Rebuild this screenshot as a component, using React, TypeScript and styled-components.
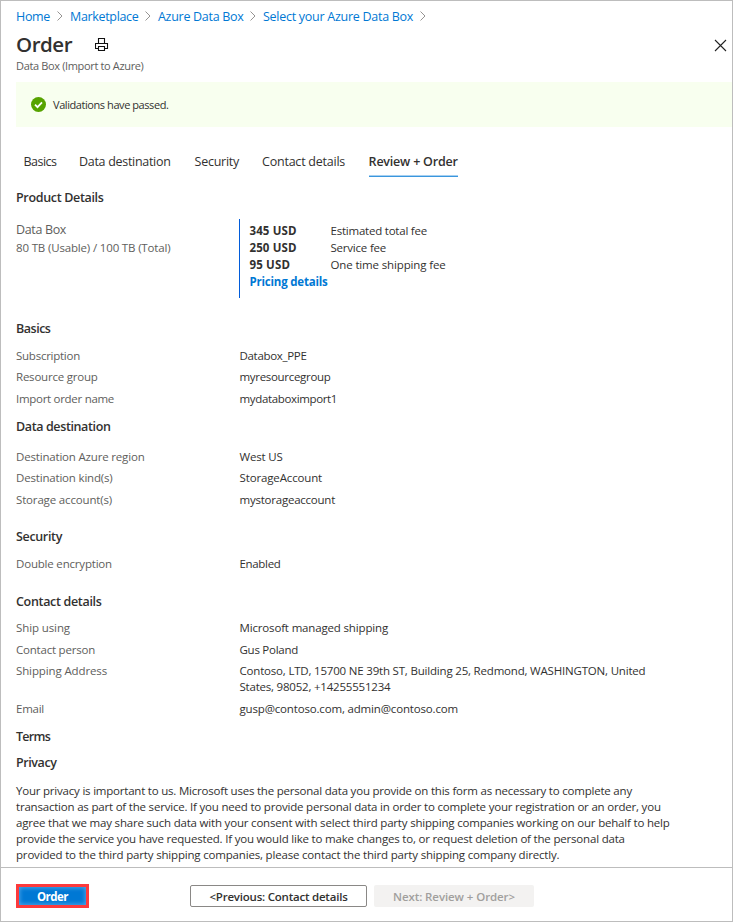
import React from "react";
import styled, { createGlobalStyle } from "styled-components";

const GlobalStyle = createGlobalStyle`
  *, *::before, *::after { box-sizing: border-box; }
  body { margin: 0; background: #fff; }
`;

const Page = styled.div`
  display: flex;
  flex-direction: column;
  width: 733px;
  height: 922px;
  border: 1px solid #bdbdbd;
  background: #fff;
  color: #323130;
  font-family: "Open Sans", "Noto Sans", sans-serif;
  font-size: 11.5px;
  line-height: 16px;
  overflow: hidden;
  white-space: nowrap;
`;

/* Letter spacing of one run of text, in px. */
const T = styled.span<{ $ls?: number }>`
  letter-spacing: ${(p) => p.$ls ?? -0.2}px;
`;

const Breadcrumbs = styled.nav`
  display: flex;
  height: 29px;
  padding: 7px 0 0 15px;
`;

const Crumb = styled.a<{ $w: number; $ls: number }>`
  display: flex;
  width: ${(p) => p.$w}px;
  justify-content: space-between;
  margin-right: 7px;
  font-size: 12.5px;
  line-height: 18px;
  color: #0078d4;
  letter-spacing: ${(p) => p.$ls}px;
`;

const ChevronIcon = styled.svg`
  width: 6px;
  height: 10px;
  margin-top: 3px;
  fill: none;
  stroke: #8a8886;
  stroke-width: 0.9;
`;

const TitleBar = styled.header`
  display: flex;
  align-items: center;
  height: 29px;
  padding: 0 5px 0 15px;
`;

const Title = styled.h1`
  margin: -2px 0 0;
  width: 79px;
  font-size: 20.5px;
  line-height: 28px;
  font-weight: 600;
  letter-spacing: -0.48px;
`;

const CloseIcon = styled.svg`
  width: 13px;
  height: 13px;
  margin-left: auto;
  margin-top: 1px;
`;

const Subtitle = styled.div`
  height: 23px;
  padding-left: 15px;
  font-size: 11px;
  line-height: 14px;
  color: #605e5c;
  letter-spacing: -0.35px;
`;

const Banner = styled.div`
  display: flex;
  align-items: center;
  gap: 7px;
  height: 45px;
  margin-left: 15px;
  padding-left: 15px;
  background: #f8ffef;
  font-size: 11px;
  letter-spacing: -0.43px;
`;

const Tabs = styled.div`
  display: flex;
  height: 51px;
  padding: 25px 0 0 22.5px;
`;

const Tab = styled.div<{ $gap: number; $ls: number; $active?: boolean }>`
  height: 25px;
  margin-right: ${(p) => p.$gap}px;
  font-size: 12.5px;
  line-height: 20px;
  letter-spacing: ${(p) => p.$ls}px;
  font-weight: ${(p) => (p.$active ? 600 : 400)};
  box-shadow: ${(p) => (p.$active ? "inset 0 -1px #3a96dd, inset 0 -2px #a6d0f1" : "none")};
`;

const Section = styled.section<{ $top: number; $gap?: number }>`
  padding: ${(p) => p.$top}px 0 0 15px;
  display: flex;
  flex-direction: column;
  gap: ${(p) => p.$gap ?? 9}px;
`;

const Heading = styled.h2<{ $ls: number }>`
  margin: 0;
  font-size: 12.5px;
  line-height: 18px;
  font-weight: 600;
  letter-spacing: ${(p) => p.$ls}px;
`;

const Rows = styled.dl`
  display: grid;
  grid-template-columns: 223.5px 1fr;
  row-gap: 5.5px;
  margin: 0;
`;

const Label = styled.dt<{ $ls?: number }>`
  color: #605e5c;
  letter-spacing: ${(p) => p.$ls ?? -0.2}px;
`;

const Value = styled.dd<{ $ls?: number }>`
  margin: 0;
  letter-spacing: ${(p) => p.$ls ?? -0.2}px;
`;

const Product = styled.div`
  display: grid;
  grid-template-columns: 223px 1fr;
  margin-top: 3px;
`;

const ProductName = styled.div`
  color: #605e5c;
  padding-top: 2px;
  line-height: 18px;
`;

const LargeLine = styled.div`
  font-size: 12.5px;
  letter-spacing: -0.35px;
`;

const Fees = styled.div`
  display: grid;
  grid-template-columns: 81px 1fr;
  grid-auto-rows: 17px;
  height: 79px;
  padding: 3px 0 0 9.5px;
  border-left: 1px solid #015cda;
  line-height: 17px;
`;

const Amount = styled.strong<{ $ls: number; $link?: boolean }>`
  font-weight: 700;
  color: ${(p) => (p.$link ? "#0078d4" : "inherit")};
  letter-spacing: ${(p) => p.$ls}px;
`;

const Policy = styled.p`
  display: flex;
  flex-direction: column;
  margin: 3px 0 0;
`;

const Footer = styled.footer`
  display: flex;
  height: 54px;
  margin-top: auto;
  padding: 17px 0 0 15px;
  border-top: 1px solid #bdbdbd;
`;

const OrderButton = styled.button`
  width: 73px;
  height: 24px;
  margin: -1px 101px 0 0;
  padding: 1px 0 0;
  border: 3px solid #fd3a3c;
  background: #0078d4;
  box-shadow: inset 0 0 4px 1px #4aa3e6;
  color: #fff;
  font: 700 11.5px/17px "Open Sans", sans-serif;
  letter-spacing: -0.5px;
`;

const NavButton = styled.button<{ $w: number; $disabled?: boolean; $ls: number }>`
  width: ${(p) => p.$w}px;
  height: 22px;
  margin: 0 7px 0 0;
  padding: 2px 0 0;
  border: ${(p) => (p.$disabled ? "0" : "1px solid #8a8886")};
  border-radius: 2px;
  background: ${(p) => (p.$disabled ? "#f3f2f1" : "#fff")};
  color: ${(p) => (p.$disabled ? "#a19f9d" : "#323130")};
  font: 600 11.5px/18px "Open Sans", sans-serif;
  letter-spacing: ${(p) => p.$ls}px;
`;

const crumbs: [string, number, number][] = [
  ["Home", 47, -0.33],
  ["Marketplace", 81, -0.33],
  ["Azure Data Box", 98, -0.29],
  ["Select your Azure Data Box", 163, -0.27],
];

const tabs: [string, number, number][] = [
  ["Basics", 22.5, -0.51],
  ["Data destination", 24, -0.3],
  ["Security", 23, -0.25],
  ["Contact details", 23.5, -0.23],
];

const policy: [string, number][] = [
  ["Your privacy is important to us. Microsoft uses the personal data you provide on this form as necessary to complete any", -0.21],
  ["transaction as part of the service. If you need to provide personal data in order to complete your registration or an order, you", -0.2],
  ["agree that we may share such data with your consent with select third party shipping companies working on our behalf to help", -0.19],
  ["provide the service you have requested. If you would like to make changes to, or request deletion of the personal data", -0.19],
  ["provided to the third party shipping companies, please contact the third party shipping company directly.", -0.18],
];

type Row = [string, number, string, number];

function DetailRows({ rows }: { rows: Row[] }) {
  return (
    <Rows>
      {rows.map(([label, ls, value, vs]) => (
        <React.Fragment key={label}>
          <Label $ls={ls}>{label}</Label>
          <Value $ls={vs}>{value}</Value>
        </React.Fragment>
      ))}
    </Rows>
  );
}

function PrintIcon() {
  return (
    <svg width="14" height="14" viewBox="0 0 14 14" fill="none" stroke="#111" strokeWidth="1.1">
      <path d="M3.5 5.5v-5h6v5M3.5 10.5h-3v-5h12v5h-3M3.5 8.5h6v4h-6z" />
    </svg>
  );
}

function SuccessIcon() {
  return (
    <svg width="15" height="15" viewBox="0 0 15 15">
      <circle cx="7.5" cy="7.5" r="7.5" fill="#57a300" />
      <path d="M4 7.6l2.5 2.5L11 5.4" fill="none" stroke="#fff" strokeWidth="1.8" />
    </svg>
  );
}

export default function App() {
  return (
    <Page>
      <GlobalStyle />
      <Breadcrumbs>
        {crumbs.map(([text, w, ls]) => (
          <Crumb key={text} $w={w} $ls={ls}>
            {text}
            <ChevronIcon viewBox="0 0 6 10">
              <path d="M0.5 0.5L5 5L0.5 9.5" />
            </ChevronIcon>
          </Crumb>
        ))}
      </Breadcrumbs>
      <TitleBar>
        <Title>Order</Title>
        <PrintIcon />
        <CloseIcon viewBox="0 0 13 13">
          <path d="M1 1l11 11M12 1L1 12" stroke="#222" strokeWidth="1.1" />
        </CloseIcon>
      </TitleBar>
      <Subtitle>Data Box (Import to Azure)</Subtitle>
      <Banner>
        <SuccessIcon />
        Validations have passed.
      </Banner>
      <Tabs>
        {tabs.map(([text, gap, ls]) => (
          <Tab key={text} $gap={gap} $ls={ls}>{text}</Tab>
        ))}
        <Tab $gap={0} $ls={-0.21} $active>Review + Order</Tab>
      </Tabs>

      <Section $top={11}>
        <Heading $ls={-0.33}>Product Details</Heading>
        <Product>
          <ProductName>
            <LargeLine>Data Box</LargeLine>
            <T $ls={-0.16}>80 TB (Usable) / 100 TB (Total)</T>
          </ProductName>
          <Fees>
            <Amount $ls={0.11}>345 USD</Amount>
            <T $ls={-0.22}>Estimated total fee</T>
            <Amount $ls={0.11}>250 USD</Amount>
            <T $ls={-0.21}>Service fee</T>
            <Amount $ls={0.15}>95 USD</Amount>
            <T $ls={-0.14}>One time shipping fee</T>
            <Amount $ls={-0.21} $link>Pricing details</Amount>
          </Fees>
        </Product>
      </Section>

      <Section $top={22} $gap={9.5}>
        <Heading $ls={-0.48}>Basics</Heading>
        <DetailRows
          rows={[
            ["Subscription", -0.25, "Databox_PPE", -0.31],
            ["Resource group", -0.22, "myresourcegroup", -0.31],
            ["Import order name", -0.29, "mydataboximport1", -0.35],
          ]}
        />
      </Section>

      <Section $top={11.5} $gap={12.5}>
        <Heading $ls={-0.38}>Data destination</Heading>
        <DetailRows
          rows={[
            ["Destination Azure region", -0.18, "West US", -0.19],
            ["Destination kind(s)", -0.18, "StorageAccount", -0.14],
            ["Storage account(s)", -0.16, "mystorageaccount", -0.23],
          ]}
        />
      </Section>

      <Section $top={20.5} $gap={10}>
        <Heading $ls={-0.34}>Security</Heading>
        <DetailRows rows={[["Double encryption", -0.19, "Enabled", -0.32]]} />
      </Section>

      <Section $top={21} $gap={9}>
        <Heading $ls={-0.32}>Contact details</Heading>
        <Rows>
          <Label $ls={-0.1}>Ship using</Label>
          <Value $ls={-0.16}>Microsoft managed shipping</Value>
          <Label $ls={-0.21}>Contact person</Label>
          <Value $ls={-0.26}>Gus Poland</Value>
          <Label $ls={-0.12}>Shipping Address</Label>
          <Value>
            <T $ls={-0.19}>Contoso, LTD, 15700 NE 39th ST, Building 25, Redmond, WASHINGTON, United</T>
            <br />
            <T $ls={-0.21}>States, 98052, +14255551234</T>
          </Value>
          <Label $ls={-0.25}>Email</Label>
          <Value $ls={-0.17}>gusp@contoso.com, admin@contoso.com</Value>
        </Rows>
      </Section>

      <Section $top={11} $gap={8}>
        <Heading $ls={-0.73}>Terms</Heading>
        <Heading $ls={-0.41}>Privacy</Heading>
        <Policy>
          {policy.map(([line, ls]) => (
            <T key={line} $ls={ls}>{line}</T>
          ))}
        </Policy>
      </Section>

      <Footer>
        <OrderButton>Order</OrderButton>
        <NavButton $w={177} $ls={-0.22}>&lt;Previous: Contact details</NavButton>
        <NavButton $w={160} $ls={-0.09} $disabled>Next: Review + Order&gt;</NavButton>
      </Footer>
    </Page>
  );
}
